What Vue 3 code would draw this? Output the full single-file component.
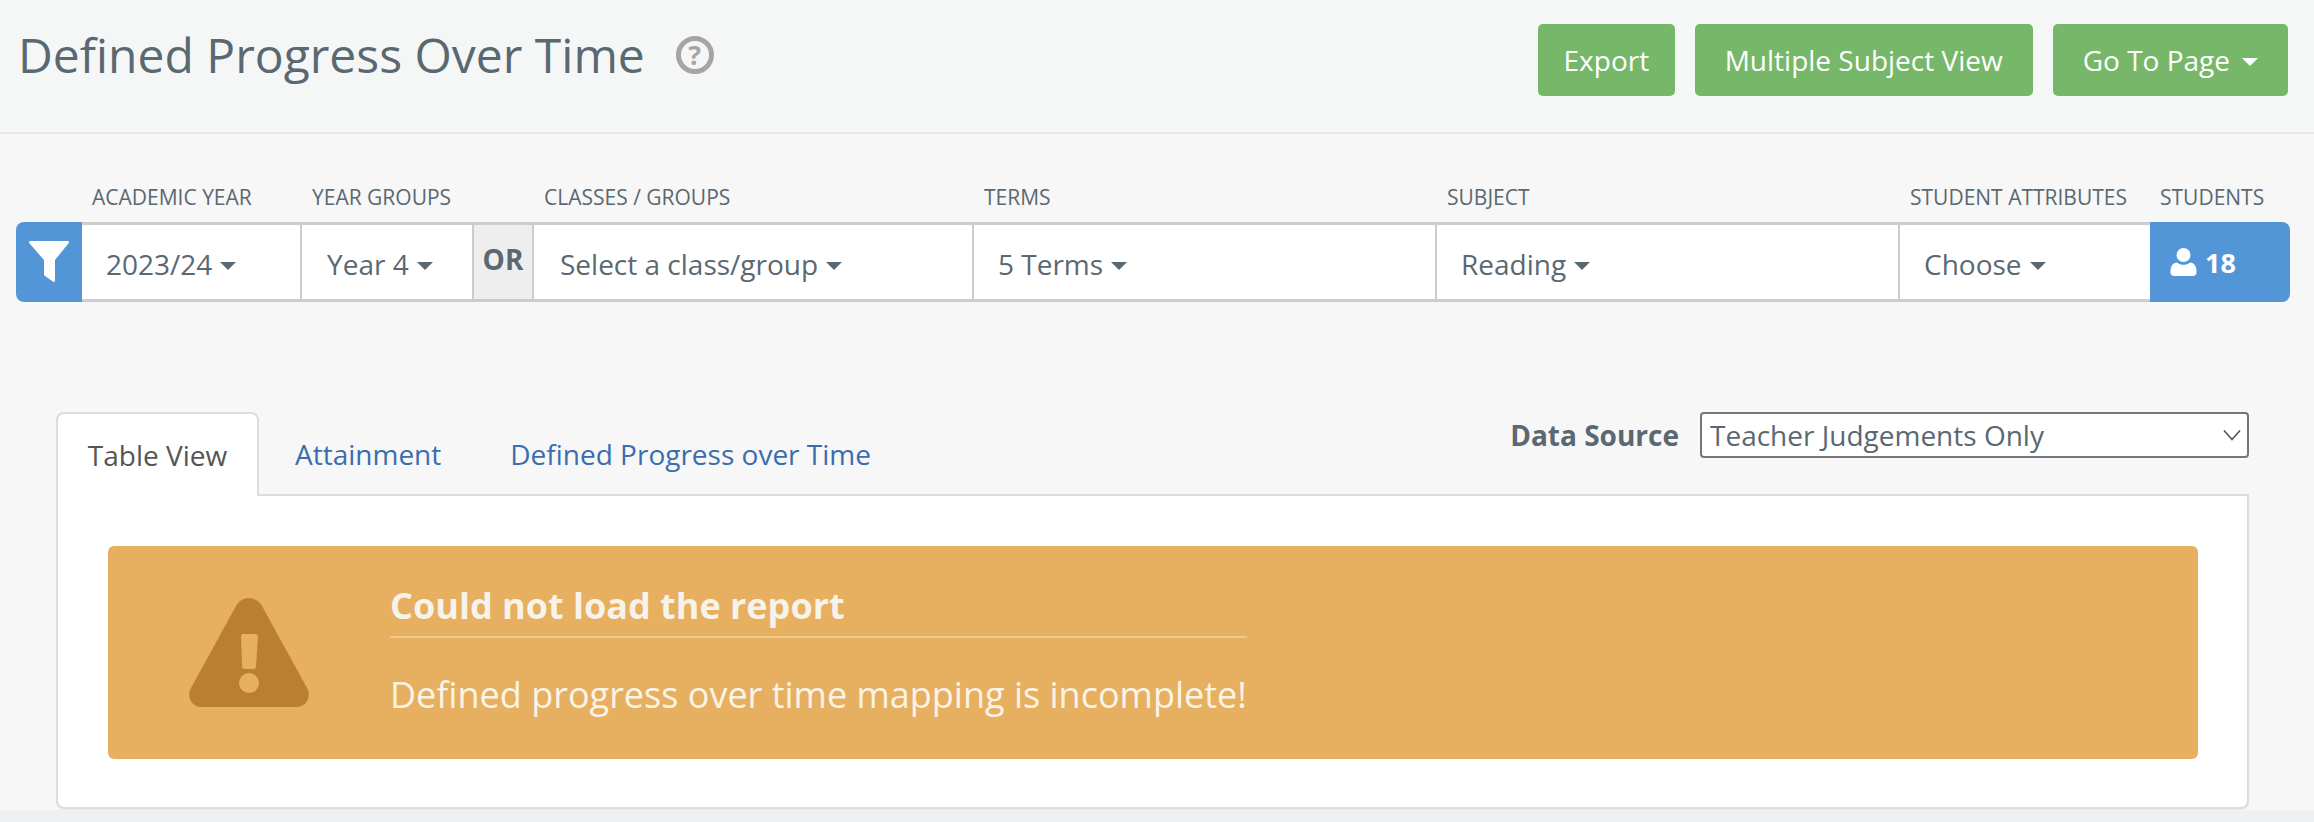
<script setup>
const filters = [
  { label: 'ACADEMIC YEAR', value: '2023/24', cls: 'c-year' },
  { label: 'YEAR GROUPS', value: 'Year 4', cls: 'c-group' },
  { label: '', value: '', cls: 'c-or', or: true },
  { label: 'CLASSES / GROUPS', value: 'Select a class/group', cls: 'c-class' },
  { label: 'TERMS', value: '5 Terms', cls: 'c-terms' },
  { label: 'SUBJECT', value: 'Reading', cls: 'c-subject' },
  { label: 'STUDENT ATTRIBUTES', value: 'Choose', cls: 'c-attr' }
]
</script>

<template>
  <div class="page">
    <header class="head">
      <div class="title-wrap">
        <h1 class="title">Defined Progress Over Time</h1>
        <span class="help">?</span>
      </div>
      <div class="actions">
        <button class="btn btn-export">Export</button>
        <button class="btn">Multiple Subject View</button>
        <button class="btn">Go To Page<i class="caret white"></i></button>
      </div>
    </header>

    <main class="main">
      <section class="filters">
        <div class="lbl-spacer"></div>
        <div v-for="f in filters" :key="'l' + f.cls" class="lbl">{{ f.label }}</div>
        <div class="lbl">STUDENTS</div>

        <div class="funnel">
          <svg width="40" height="41" viewBox="0 0 40 41">
            <path fill="#fff" d="M1.500 0H38.500C39.800 0 40.400 1.300 39.600 2.300L26 19V39.500C26 41 24.800 41.300 23.800 40.500L16 35C15.300 34.500 15 34 15 33V19L.4 2.300C-.4 1.300.2 0 1.500 0Z" />
          </svg>
        </div>
        <div v-for="f in filters" :key="f.cls" class="cell" :class="[f.cls, { or: f.or }]">
          <template v-if="f.or">OR</template>
          <template v-else>{{ f.value }}<i class="caret"></i></template>
        </div>
        <div class="students">
          <svg width="27" height="28" viewBox="0 0 27 28">
            <circle cx="13.500" cy="7" r="7" fill="#fff" />
            <path fill="#fff" d="M7 14.500C9 16 11 16.800 13.500 16.800S18 16 20 14.500C24 14.800 26.500 18 26.500 23.500V24.500C26.500 26.800 25 28 23 28H4C2 28 .5 26.800.5 24.500V23.500C.5 18 3 14.800 7 14.500Z" />
          </svg>
          <span>18</span>
        </div>
      </section>

      <section class="report">
        <div class="tabbar">
          <nav class="tabs">
            <a class="tab active">Table View</a>
            <a class="tab">Attainment</a>
            <a class="tab">Defined Progress over Time</a>
          </nav>
          <div class="source">
            <label class="source-label" for="src">Data Source</label>
            <div class="select-wrap">
              <select id="src" class="select">
                <option>Teacher Judgements Only</option>
              </select>
              <svg class="chev" width="18" height="12" viewBox="0 0 18 12">
                <path d="M1 1.500L9 10.500L17 1.500" fill="none" stroke="#555" stroke-width="1.600" />
              </svg>
            </div>
          </div>
        </div>

        <div class="panel">
          <div class="alert">
            <div class="alert-icon">
              <svg width="122" height="109" viewBox="0 0 122 109">
                <path fill="#bb7f31" d="M48 8C53-2.500 68-2.500 74 8L119 90C124 99 118 109 108 109H13C4 109-2 99 3 90Z" />
                <path fill="#e6b060" d="M53 38C53 37 54 36 55 36H67C68 36 70 37 70 38L68 68C68 70 67 71 65 71H57C55 71 54 70 54 68Z" />
                <circle cx="61" cy="85" r="10" fill="#e6b060" />
              </svg>
            </div>
            <div class="alert-body">
              <h2 class="alert-title">Could not load the report</h2>
              <p class="alert-text">Defined progress over time mapping is incomplete!</p>
            </div>
          </div>
        </div>
      </section>
    </main>
  </div>
</template>

<style>
html, body { margin: 0; background: #eef1f2; }
</style>

<style scoped>
.page {
  font-family: "Open Sans", "Liberation Sans", sans-serif;
  color: #5a6872;
  width: 2314px;
  height: 822px;
  overflow: hidden;
  background: #eef1f2;
}
.head {
  height: 132px;
  box-sizing: content-box;
  background: #f5f7f7;
  border-bottom: 2px solid #e4e8ea;
  display: flex;
  justify-content: space-between;
  align-items: flex-start;
  padding: 0 26px 0 18px;
}
.title-wrap {
  display: flex;
  align-items: center;
  height: 110px;
}
.title {
  margin: 0;
  font-size: 48px;
  font-weight: 400;
  line-height: 1;
  color: #5a6872;
}
.help {
  width: 38px;
  height: 38px;
  box-sizing: border-box;
  border: 5px solid #a5a5a5;
  border-radius: 50%;
  margin-left: 31px;
  color: #a5a5a5;
  font-size: 27px;
  font-weight: 700;
  line-height: 28px;
  text-align: center;
}
.actions {
  display: flex;
  gap: 20px;
  padding-top: 24px;
}
.btn {
  height: 72px;
  padding: 0 30px;
  border: 0;
  border-radius: 5px;
  background: #77b769;
  color: #fff;
  font: 400 28px "Open Sans", sans-serif;
  display: flex;
  align-items: center;
}
.btn-export { padding: 0 25.5px; }
.main {
  height: 676px;
  background: #f7f7f7;
  overflow: hidden;
}
.filters {
  display: grid;
  grid-template-columns: 66px 220px 172px 60px 440px 463px 463px 250px 140px;
  grid-template-rows: 88px 80px;
  margin-left: 16px;
  width: 2274px;
}
.lbl {
  align-self: end;
  padding: 0 0 11px 10px;
  font-size: 21px;
  font-weight: 400;
  line-height: 28px;
  white-space: nowrap;
  color: #5a6872;
}
.funnel {
  background: #5296d8;
  border-radius: 8px 0 0 8px;
  display: flex;
  align-items: center;
  justify-content: center;
  padding-bottom: 1px;
}
.cell {
  background: #fff;
  border-top: 3px solid #ccc;
  border-bottom: 3px solid #ccc;
  border-right: 2px solid #ccc;
  display: flex;
  align-items: center;
  padding: 3px 0 0 24px;
  font-size: 28px;
  font-weight: 400;
  color: #5a6872;
}
.cell.c-group { padding-left: 25px; }
.cell.c-class { padding-left: 26px; }
.cell.or {
  background: #eee;
  padding: 0 0 6px;
  justify-content: center;
  font-weight: 700;
  font-size: 28px;
}
.cell.c-attr { border-right: 0; }
.caret {
  display: inline-block;
  width: 0;
  height: 0;
  margin-left: 8px;
  margin-top: 4px;
  border-left: 8px solid transparent;
  border-right: 8px solid transparent;
  border-top: 8px solid #5a6872;
}
.caret.white {
  border-top-color: #fff;
  margin-left: 12px;
}
.students {
  background: #5296d8;
  border-radius: 0 8px 8px 0;
  color: #fff;
  display: flex;
  align-items: center;
  gap: 8px;
  padding-left: 20px;
  font-size: 27px;
  font-weight: 700;
}
.report {
  margin: 0 65px 0 56px;
  padding-top: 110px;
}
.tabbar {
  display: flex;
  justify-content: space-between;
  align-items: flex-start;
  height: 82px;
  position: relative;
  z-index: 1;
}
.tabs {
  display: flex;
}
.tab {
  height: 82px;
  box-sizing: border-box;
  display: flex;
  align-items: center;
  padding: 0 30px;
  font-size: 28px;
  font-weight: 400;
  color: #3a6db0;
  white-space: nowrap;
  border: 2px solid transparent;
  border-bottom: 0;
  margin-right: 5px;
}
.tab.active {
  width: 203px;
  padding: 0;
  margin-right: 4px;
  justify-content: center;
  background: #fff;
  color: #555;
  border-color: #ddd;
  border-radius: 8px 8px 0 0;
  height: 84px;
}
.source {
  display: flex;
  align-items: center;
  gap: 21px;
}
.source-label {
  font-size: 28px;
  font-weight: 700;
  color: #5a6872;
}
.select-wrap {
  position: relative;
  width: 549px;
  height: 46px;
}
.select {
  appearance: none;
  width: 100%;
  height: 100%;
  box-sizing: border-box;
  border: 2px solid #767676;
  border-radius: 4px;
  background: #fff;
  padding: 0 0 0 8px;
  font: 400 28px "Open Sans", sans-serif;
  color: #5a6872;
}
.chev {
  position: absolute;
  right: 8px;
  top: 17px;
}
.panel {
  height: 315px;
  box-sizing: border-box;
  background: #fff;
  border: 2px solid #ddd;
  border-radius: 0 0 8px 8px;
  padding: 50px 49px 0 50px;
  box-shadow: 0 1px 2px rgba(0, 0, 0, 0.06);
}
.alert {
  height: 213px;
  background: #e6b060;
  border-radius: 6px;
  display: flex;
}
.alert-icon {
  width: 282px;
  padding: 52px 0 0 80px;
  box-sizing: border-box;
}
.alert-body {
  color: #fff;
  padding-top: 38px;
}
.alert-title {
  margin: 0;
  font-size: 36px;
  font-weight: 700;
  line-height: 44px;
  padding-bottom: 8px;
  border-bottom: 2px solid #f0c98e;
  color: #f7f2ea;
}
.alert-text {
  margin: 34px 0 0;
  font-size: 36px;
  font-weight: 400;
  line-height: 46px;
  color: #fbf3e6;
  white-space: nowrap;
}
</style>
